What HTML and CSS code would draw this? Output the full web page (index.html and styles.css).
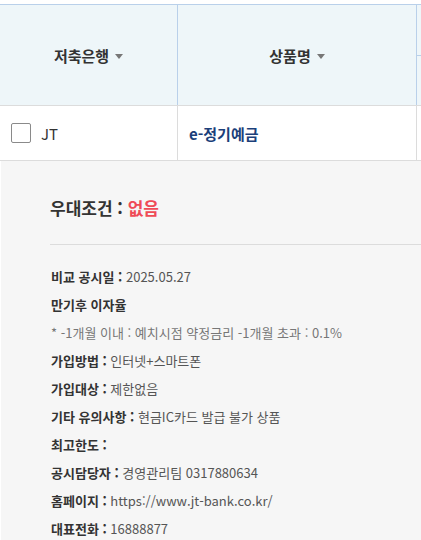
FILE: index.html
```html
<!DOCTYPE html>
<html lang="ko">
<head>
  <meta charset="UTF-8">
  <meta name="viewport" content="width=device-width, initial-scale=1.0">
  <title>예금 상품 비교</title>
  <link rel="stylesheet" href="styles.css">
</head>
<body>
  <div class="table">
    <div class="thead">
      <div class="th">저축은행 <span class="caret"></span></div>
      <div class="th">상품명 <span class="caret"></span></div>
      <div class="th th-split">
        <div class="th-top"></div>
        <div class="th-bottom"></div>
      </div>
    </div>
    <div class="row">
      <div class="td td-bank">
        <span class="check"></span>
        <span>JT</span>
      </div>
      <div class="td td-name">e-정기예금</div>
      <div class="td"></div>
    </div>
  </div>

  <div class="detail">
    <h3 class="detail-title">우대조건 : <span class="none">없음</span></h3>
    <ul class="info">
      <li><b>비교 공시일 :</b> 2025.05.27</li>
      <li><b>만기후 이자율</b></li>
      <li class="note">* -1개월 이내 : 예치시점 약정금리 -1개월 초과 : 0.1%</li>
      <li><b>가입방법 :</b> 인터넷+스마트폰</li>
      <li><b>가입대상 :</b> 제한없음</li>
      <li><b>기타 유의사항 :</b> 현금IC카드 발급 불가 상품</li>
      <li><b>최고한도 :</b></li>
      <li><b>공시담당자 :</b> 경영관리팀 0317880634</li>
      <li><b>홈페이지 :</b> https://www.jt-bank.co.kr/</li>
      <li><b>대표전화 :</b> 16888877</li>
    </ul>
  </div>
</body>
</html>
```

FILE: styles.css
```css
body {
  margin: 0;
  padding-top: 4px;
  background: #fff;
  color: #333;
  font-family: "Noto Sans CJK KR", "Noto Sans", sans-serif;
  overflow: hidden;
}

.table {
  width: 440px;
}

.thead,
.row {
  display: grid;
  grid-template-columns: 178px 239px 1fr;
}

.thead {
  height: 100px;
  background: #eef6f9;
  border-top: 1px solid #b9d0ea;
  border-bottom: 1px solid #dcdcdc;
}
.th {
  display: flex;
  align-items: center;
  justify-content: center;
  gap: 6px;
  font-size: 15px;
  font-weight: bold;
  color: #333;
  border-right: 1px solid #b9d0ea;
}
.caret {
  width: 0;
  height: 0;
  border-left: 4px solid transparent;
  border-right: 4px solid transparent;
  border-top: 5px solid #777;
  margin-top: 2px;
}
.th-split {
  flex-direction: column;
  align-items: stretch;
  gap: 0;
}
.th-top,
.th-bottom {
  flex: 1;
}
.th-top {
  border-bottom: 1px solid #b9d0ea;
}

.row {
  height: 54px;
  border-bottom: 1px solid #dcdcdc;
}
.td {
  display: flex;
  align-items: center;
  font-size: 15px;
  border-right: 1px solid #dcdcdc;
}
.td-bank {
  padding-left: 11px;
  gap: 10px;
  color: #333;
}
.check {
  width: 18px;
  height: 18px;
  border: 1px solid #8a8a8a;
  border-radius: 2px;
  background: #fff;
}
.td-name {
  padding-left: 11px;
  font-weight: bold;
  color: #1b3f7a;
}

.detail {
  margin-left: 1px;
  background: #f6f6f6;
  padding: 34px 0 40px 49px;
}
.detail-title {
  margin: 0;
  padding-bottom: 23px;
  border-bottom: 1px solid #dcdcdc;
  font-size: 17px;
  line-height: 26px;
  color: #333;
}
.none {
  color: #ef4b57;
}

.info {
  list-style: none;
  margin: 0;
  padding: 18px 0 0 1px;
  font-size: 13px;
  line-height: 28px;
  color: #555;
}
.info b {
  color: #333;
}
.info .note {
  color: #777;
}
```
